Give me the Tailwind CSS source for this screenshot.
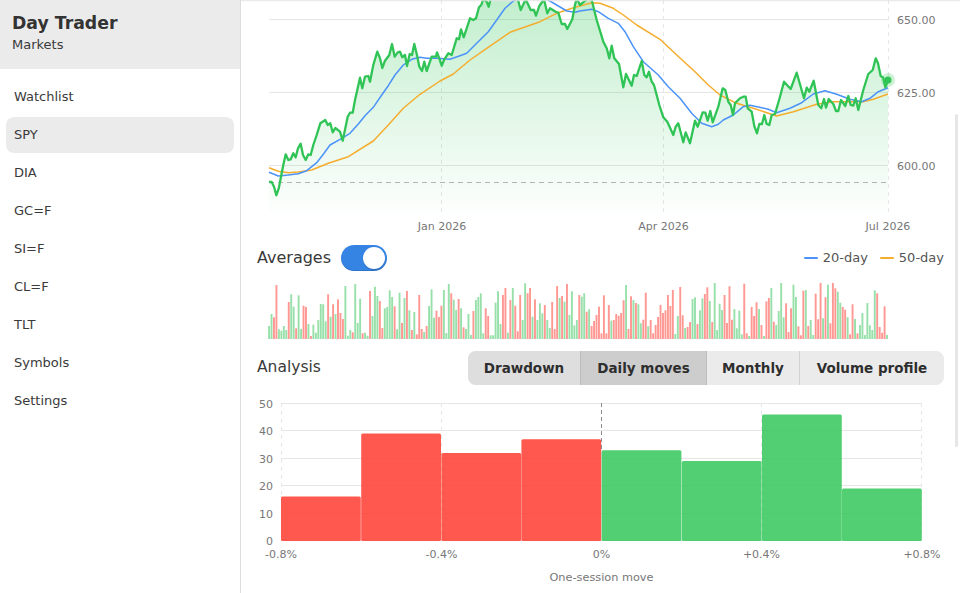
<!DOCTYPE html>
<html lang="en">
  <head>
    <meta charset="UTF-8" />
    <title>Day Trader</title>
    <script src="https://cdn.jsdelivr.net/npm/@tailwindcss/browser@4"></script>
  </head>
  <body class="bg-white font-['DejaVu_Sans',sans-serif] text-[#2e2e2e] overflow-hidden">
    <div class="flex w-[960px] h-[593px] overflow-hidden">
      <aside class="w-[241px] h-full shrink-0 border-r border-[#dcdcdc] bg-white">
        <div class="h-[69px] bg-[#ebebeb] pl-3 pt-[12px]">
          <h1 class="text-[17.3px] leading-[22px] font-bold text-[#333333]">Day Trader</h1>
          <p class="text-[13px] leading-[16px] mt-[3px] text-[#3a3a3a]">Markets</p>
        </div>
        <nav class="flex flex-col gap-[2px] px-[6px] pt-[10px] text-[13px] text-[#3a3a3a]">
          <a class="h-[36px] flex items-center px-2 rounded-lg">Watchlist</a>
          <a class="h-[36px] flex items-center px-2 rounded-lg bg-[#ebebeb]">SPY</a>
          <a class="h-[36px] flex items-center px-2 rounded-lg">DIA</a>
          <a class="h-[36px] flex items-center px-2 rounded-lg">GC=F</a>
          <a class="h-[36px] flex items-center px-2 rounded-lg">SI=F</a>
          <a class="h-[36px] flex items-center px-2 rounded-lg">CL=F</a>
          <a class="h-[36px] flex items-center px-2 rounded-lg">TLT</a>
          <a class="h-[36px] flex items-center px-2 rounded-lg">Symbols</a>
          <a class="h-[36px] flex items-center px-2 rounded-lg">Settings</a>
        </nav>
      </aside>

      <main class="relative flex-1 flex flex-col min-w-0">
        <!-- undershoot shadow and scrollbar sit over the content -->
        <div class="absolute top-0 left-0 right-0 h-[2px] bg-gradient-to-b from-[#e4e4e4] to-transparent"></div>
        <div class="absolute left-[714px] top-[114px] w-[3px] h-[333px] rounded-full bg-[#e6e6e6]"></div>

        <svg class="block h-[245px] w-[719px] shrink-0" viewBox="241 0 719 245">
          <defs>
            <linearGradient id="priceFill" gradientUnits="userSpaceOnUse" x1="0" y1="0" x2="0" y2="212">
              <stop offset="0" stop-color="#34c759" stop-opacity="0.3" />
              <stop offset="1" stop-color="#34c759" stop-opacity="0.01" />
            </linearGradient>
          </defs>
          <g stroke="#e6e6e6" stroke-width="1">
            <path d="M269 19.5H888M269 92.5H888M269 165.5H888" />
            <path stroke-dasharray="4 4" d="M441.5 0V212M663.5 0V212M888.5 0V212" />
          </g>
          <polygon id="priceArea" fill="url(#priceFill)" />
          <path d="M269 182.5H888" stroke="#b4b4b4" stroke-dasharray="5 4" />
          <polyline id="ma50" fill="none" stroke="#f5ad2e" stroke-width="1.5" stroke-linejoin="round" />
          <polyline id="ma20" fill="none" stroke="#4c93f7" stroke-width="1.5" stroke-linejoin="round" />
          <polyline id="price" fill="none" stroke="#2fc455" stroke-width="2.3" stroke-linejoin="round" />
          <circle cx="888" cy="80" r="7" fill="#34c759" fill-opacity="0.25" />
          <circle cx="888" cy="80" r="3.5" fill="#2fc455" />
          <g class="text-[11px] fill-[#777777]">
            <text x="897" y="23.5">650.00</text>
            <text x="897" y="96.5">625.00</text>
            <text x="897" y="169.5">600.00</text>
            <text x="442" y="230" text-anchor="middle">Jan 2026</text>
            <text x="663.5" y="230" text-anchor="middle">Apr 2026</text>
            <text x="888" y="230" text-anchor="middle">Jul 2026</text>
          </g>
        </svg>

        <div class="flex items-center h-[26px] px-4 shrink-0">
          <span class="w-[74px] text-[16px] whitespace-nowrap text-[#3a3a3a]">Averages</span>
          <div class="ml-[10px] w-[46px] h-[26px] rounded-full bg-[#3584e4] shadow-[inset_0_-1px_0_rgba(0,0,0,0.12)] flex items-center justify-end pr-[2px]">
            <div class="w-[22px] h-[22px] rounded-full bg-white shadow-[0_1px_1px_rgba(0,0,0,0.2)]"></div>
          </div>
          <div class="ml-auto flex items-center text-[13px] text-[#555555]">
            <span class="w-[14px] h-[2px] bg-[#4c93f7] rounded-full"></span>
            <span class="ml-[5px]">20-day</span>
            <span class="ml-3 w-[14px] h-[2px] bg-[#f5ad2e] rounded-full"></span>
            <span class="ml-[5px]">50-day</span>
          </div>
        </div>

        <svg id="volume" class="block mt-[12px] h-[56px] w-[719px] shrink-0" viewBox="241 283 719 56"></svg>

        <div class="flex items-center justify-between h-[34px] mt-[12px] pl-4 pr-4 shrink-0">
          <span class="text-[15.5px] text-[#3a3a3a]">Analysis</span>
          <div class="flex h-full rounded-lg overflow-hidden bg-[#ebebeb] text-[13.5px] font-bold text-[#2e2e2e]">
            <button class="w-[113px] bg-[#dedede] border-r border-[#bdbdbd]">Drawdown</button>
            <button class="w-[126px] bg-[#cdcdcd] border-r border-[#bdbdbd]">Daily moves</button>
            <button class="w-[93px] border-r border-[#d2d2d2]">Monthly</button>
            <button class="w-[144px]">Volume profile</button>
          </div>
        </div>

        <svg class="block mt-[8px] h-[200px] w-[719px] shrink-0" viewBox="241 393 719 200">
          <g stroke="#e6e6e6" stroke-width="1">
            <path d="M281 403.5H922M281 430.5H922M281 458.5H922M281 485.5H922M281 513.5H922M281 540.5H922" />
            <path stroke-dasharray="4 4" d="M281.5 403V541M441.5 403V541M761.5 403V541M921.5 403V541" />
          </g>
          <g fill="#ff3b30" fill-opacity="0.85">
            <rect x="281" y="496.6" width="79.8" height="44.4" rx="1.5" />
            <rect x="361.2" y="433.6" width="79.8" height="107.4" rx="1.5" />
            <rect x="441.4" y="453" width="79.8" height="88" rx="1.5" />
            <rect x="521.4" y="439.2" width="79.8" height="101.8" rx="1.5" />
          </g>
          <g fill="#34c759" fill-opacity="0.85">
            <rect x="601.6" y="450.2" width="79.8" height="90.8" rx="1.5" />
            <rect x="681.8" y="461" width="79.8" height="80" rx="1.5" />
            <rect x="762" y="414.4" width="79.8" height="126.6" rx="1.5" />
            <rect x="842" y="488.6" width="79.8" height="52.4" rx="1.5" />
          </g>
          <path d="M601.5 403V450" stroke="#8c8c8c" stroke-dasharray="4 3" />
          <g class="text-[11px] fill-[#777777]">
            <g text-anchor="end">
              <text x="273" y="407.5">50</text>
              <text x="273" y="434.5">40</text>
              <text x="273" y="462.5">30</text>
              <text x="273" y="489.5">20</text>
              <text x="273" y="517.5">10</text>
              <text x="273" y="544.5">0</text>
            </g>
            <g text-anchor="middle">
              <text x="281" y="558">-0.8%</text>
              <text x="441.5" y="558">-0.4%</text>
              <text x="601.5" y="558">0%</text>
              <text x="761.5" y="558">+0.4%</text>
              <text x="922" y="558">+0.8%</text>
              <text class="text-[11.3px]" x="601.5" y="581">One-session move</text>
            </g>
          </g>
        </svg>
      </main>
    </div>

    <script>
      // curves traced at 3x: first list starts at x=260, second at x=580
      const pts = (a, b) => [
        ...a.map(([x, y]) => [260 + x / 3, y / 3]),
        ...b.map(([x, y]) => [580 + x / 3, y / 3]),
      ];
      const str = (p) => p.map(([x, y]) => x.toFixed(1) + "," + y.toFixed(1)).join(" ");

      const price = pts(
        [[27,546],[35,546],[42,560],[49,586],[56,566],[63,530],[70,495],[77,463],[85,480],[92,478],[100,460],[107,472],[114,445],[122,431],[129,465],[137,480],[145,463],[152,465],[160,435],[170,405],[181,370],[196,360],[203,375],[211,370],[218,397],[226,384],[240,395],[248,422],[256,385],[263,350],[270,338],[278,338],[285,300],[292,270],[300,233],[307,265],[315,230],[325,228],[330,245],[340,195],[352,155],[360,175],[367,204],[375,182],[388,165],[396,132],[404,170],[413,157],[420,155],[427,172],[435,165],[441,198],[449,162],[456,165],[463,132],[471,165],[478,200],[486,213],[493,185],[500,213],[515,170],[528,170],[531,157],[538,175],[545,197],[553,178],[565,160],[575,165],[590,115],[597,118],[603,88],[611,112],[630,55],[640,60],[648,55],[657,22],[664,15],[670,-3],[680,5],[686,20],[692,-5],[720,-30],[752,-30],[772,-8],[782,30],[797,-2],[812,30],[822,30],[828,47],[838,18],[852,-2],[862,40],[870,25],[887,35],[895,38],[905,72],[915,72],[922,87],[937,58],[945,15],[950,-5]],
        [[0,15],[12,5],[25,-5],[35,0],[50,60],[70,125],[80,145],[88,175],[95,137],[103,175],[117,192],[130,262],[138,222],[155,257],[162,225],[170,228],[185,183],[193,225],[200,232],[207,215],[215,245],[222,255],[238,315],[250,352],[262,365],[280,405],[287,380],[295,370],[310,427],[317,397],[330,430],[345,362],[353,380],[368,337],[376,338],[383,362],[391,333],[398,367],[415,320],[428,265],[436,270],[445,305],[452,315],[459,345],[465,310],[480,295],[490,290],[497,290],[503,325],[515,335],[523,378],[531,400],[538,372],[546,372],[553,345],[560,372],[568,375],[575,345],[585,342],[600,290],[612,245],[632,267],[650,218],[672,295],[680,263],[688,275],[701,242],[715,315],[724,325],[732,297],[738,323],[746,297],[760,312],[768,333],[775,333],[783,300],[796,318],[805,288],[812,315],[820,317],[827,295],[835,330],[850,270],[865,222],[878,210],[887,175],[894,190],[902,228],[910,233],[916,262],[924,240]]
      );
      const ma20 = pts(
        [[27,517],[55,528],[85,525],[115,521],[140,512],[170,488],[190,463],[210,435],[240,418],[270,400],[295,372],[315,347],[340,322],[365,285],[385,257],[405,225],[430,195],[455,178],[480,172],[500,175],[530,175],[570,178],[600,167],[620,160],[650,130],[685,95],[710,60],[735,25],[760,3],[775,-5],[820,-12],[865,0],[890,15],[920,33],[945,37]],
        [[0,33],[35,28],[55,35],[85,55],[115,70],[135,95],[160,140],[190,185],[235,225],[265,260],[300,295],[335,340],[365,370],[395,380],[415,373],[430,360],[460,345],[490,320],[510,316],[545,323],[565,328],[590,338],[630,325],[665,308],[700,282],[735,272],[770,283],[810,298],[845,305],[870,295],[895,275],[924,263]]
      );
      const ma50 = pts(
        [[27,503],[55,514],[85,518],[115,516],[155,510],[205,490],[265,470],[340,423],[385,375],[430,325],[480,283],[540,243],[580,222],[630,180],[680,145],[750,97],[840,65],[890,40],[945,22]],
        [[0,18],[35,8],[60,10],[100,25],[130,45],[170,75],[240,118],[290,165],[345,215],[385,255],[420,285],[470,310],[520,325],[590,348],[640,335],[710,313],[760,305],[850,305],[880,298],[924,282]]
      );
      document.getElementById("price").setAttribute("points", str(price));
      document.getElementById("ma20").setAttribute("points", str(ma20));
      document.getElementById("ma50").setAttribute("points", str(ma50));
      document.getElementById("priceArea").setAttribute("points", "269,212 " + str(price) + " 888,212");

      // volume bars: colour, then top of bar in 3x crop (baseline 297)
      const vol = "g258 g222 r232 r135 g268 g272 g258 g270 r186 g163 g200 r265 g166 g267 r197 r201 g252 r288 g254 g278 g240 g192 g193 g244 r163 g230 r193 g222 r178 r219 r237 g138 g287 g270 r277 g132 g249 g176 r280 g278 g287 r153 g228 g140 g168 r183 r264 g205 g201 g151 g171 r199 g268 g158 r249 g174 r153 g211 r270 g216 r283 r165 r267 g276 r258 g198 g148 g233 r212 r231 r197 g150 g279 g132 r160 g179 g210 r177 g205 r262 g267 g222 g285 r213 g180 g171 g160 g280 r205 r228 g286 g286 g188 g154 g252 r165 r144 g278 r180 g144 r197 r274 r165 g240 g130 r160 r144 g230 r178 g240 g190 g220 r195 g240 g264 r186 r267 r138 g174 r168 g185 r132 g225 g154 g256 g240 r165 g170 g160 r215 g208 r258 r243 r225 r200 r280 r166 r280 r195 g242 r240 r222 r227 r219 r181 g135 r267 r169 g180 r189 g193 g250 r239 r158 g259 r240 r280 r255 r231 r195 r219 r211 r165 r198 r150 g282 g228 r141 r226 g264 r261 r246 g177 g172 r252 g211 g175 r162 r142 g183 r246 g129 g270 g191 g210 r165 r249 r139 r239 g207 g265 g212 g283 r131 r280 g288 r201 r228 r187 g207 r255 g288 r184 r174 g144 r245 g255 g213 g129 g232 r190 r276 r205 g134 g171 r259 r286 r152 g150 r258 g240 g285 r161 r238 r129 g235 r172 g134 r250 r129 r145 g155 g188 r201 r209 g232 r283 r193 g237 r280 g255 g219 g285 g189 g256 g270 g151 r160 r261 r278 r199 g285".split(" ");
      const step = 618 / (vol.length - 1);
      document.getElementById("volume").innerHTML = vol
        .map((v, i) => {
          const top = 240 + Number(v.slice(1)) / 3;
          const fill = v[0] === "g" ? "#97e0aa" : "#ff9792";
          return `<rect x="${(269 + i * step - 0.9).toFixed(2)}" y="${top.toFixed(1)}" width="1.9" height="${(339 - top).toFixed(1)}" fill="${fill}" />`;
        })
        .join("");
    </script>
  </body>
</html>
